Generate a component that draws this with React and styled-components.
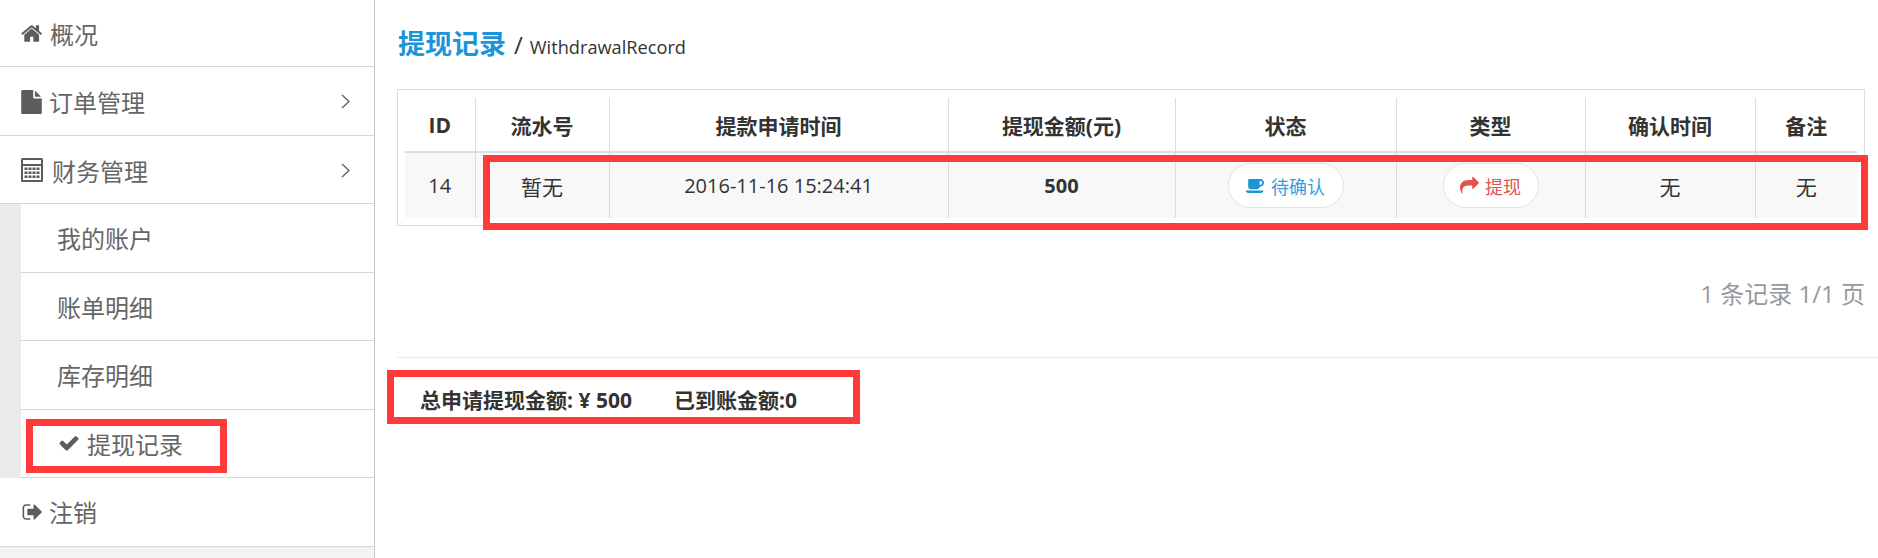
import React from "react";
import styled, { createGlobalStyle } from "styled-components";

const GlobalStyle = createGlobalStyle`
  html, body {
    margin: 0;
    padding: 0;
    background: #fff;
    font-family: "Open Sans", "Noto Sans CJK SC", sans-serif;
    color: #333;
    overflow: hidden;
  }
`;

const Page = styled.div`
  position: relative;
  display: flex;
  width: 1878px;
  height: 558px;
  overflow: hidden;
`;

const Sidebar = styled.aside`
  width: 374px;
  flex: none;
  display: flex;
  flex-direction: column;
  border-right: 1px solid #c8c8c8;
  background: #f3f3f3;
`;

const MenuRow = styled.div`
  display: flex;
  align-items: center;
  gap: ${(p) => p.$gap || 6}px;
  height: ${(p) => p.$height || 68.5}px;
  box-sizing: border-box;
  flex: none;
  padding: ${(p) => p.$shift || 0}px 25px 0 21px;
  background: #fff;
  border-bottom: 1px solid #d6d6d6;
  color: #666;
  font-size: 24px;
`;

const MenuLabel = styled.span`
  flex: 1;
`;

const SubMenu = styled.div`
  display: flex;
  flex-direction: column;
  flex: none;
  padding-left: 21px;
  background: #ebebeb;
`;

const SubRow = styled(MenuRow)`
  padding-left: ${(p) => (p.$active ? 37 : 36)}px;
  gap: 7px;
`;

const Icon = styled.svg`
  flex: none;
  width: ${(p) => p.$w}px;
  height: ${(p) => p.$h}px;
  fill: ${(p) => p.$color || "#5c5c5c"};
`;

const Chevron = styled.svg`
  flex: none;
  width: 9px;
  height: 15px;
  margin-right: -1px;
  fill: none;
  stroke: #666;
  stroke-width: 1.5;
`;

const Main = styled.main`
  flex: 1;
  min-width: 0;
  padding: 0 13px 0 22px;
`;

const TitleRow = styled.div`
  display: flex;
  align-items: baseline;
  height: 89px;
  box-sizing: border-box;
  padding: 26px 0 0 1px;
  color: #333;
`;

const Title = styled.h1`
  margin: 0;
  font-size: 27px;
  line-height: 36px;
  font-weight: 700;
  color: #1b95d8;
`;

const Slash = styled.span`
  margin: 0 7px 0 8px;
  font-size: 24px;
`;

const Subtitle = styled.span`
  font-size: 18.2px;
`;

const TableBox = styled.div`
  width: 1468px;
  height: 137px;
  box-sizing: border-box;
  padding: 8px 7px 7px;
  border: 1px solid #dcdcdc;
`;

const Table = styled.table`
  width: 1452px;
  table-layout: fixed;
  border-collapse: collapse;
`;

const Th = styled.th`
  height: 53px;
  padding: 0;
  font-size: 21px;
  font-weight: 700;
  color: #333;
  text-align: center;
  border-bottom: 2px solid #dcdcdc;
  border-left: 1px solid #dcdcdc;
  &:first-child {
    border-left: 0;
  }
`;

const Td = styled.td`
  height: 65px;
  padding: 0;
  font-size: ${(p) => (p.$cjk ? 21 : 20)}px;
  font-weight: ${(p) => (p.$bold ? 700 : 400)};
  color: #333;
  text-align: center;
  background: #f8f8f8;
  border-left: 1px solid #dcdcdc;
  &:first-child {
    border-left: 0;
  }
`;

const Pill = styled.span`
  display: inline-flex;
  align-items: center;
  justify-content: center;
  gap: 6px;
  width: ${(p) => p.$width}px;
  height: 45px;
  box-sizing: border-box;
  vertical-align: middle;
  background: #fff;
  border: 1px solid #e3e3e3;
  border-radius: 23px;
  font-size: 18px;
  color: ${(p) => p.$color};
`;

const Pager = styled.div`
  height: 131px;
  box-sizing: border-box;
  padding-top: 50px;
  text-align: right;
  width: 1468px;
  font-size: 24px;
  line-height: 36px;
  color: #999;
`;

const Rule = styled.hr`
  margin: 0 -13px 0 0;
  border: 0;
  border-top: 1px solid #eaeaea;
`;

const Totals = styled.div`
  display: flex;
  gap: 42px;
  padding: 27px 0 0 23px;
  font-size: 21px;
  line-height: 30px;
  font-weight: 700;
  color: #333;
`;

const Annotation = styled.div`
  position: absolute;
  left: ${(p) => p.$left}px;
  top: ${(p) => p.$top}px;
  width: ${(p) => p.$width}px;
  height: ${(p) => p.$height}px;
  box-sizing: border-box;
  border: 7px solid #ff3a3a;
  pointer-events: none;
`;

const HomeIcon = () => (
  <Icon $w={23} $h={23} viewBox="0 0 1792 1792">
    <path d="M1408 992v480q0 26-19 45t-45 19h-384v-384h-256v384h-384q-26 0-45-19t-19-45v-480q0-1 .5-3t.5-3l575-474 575 474q1 2 1 6zm223-69l-62 74q-8 9-21 11h-3q-13 0-21-7l-692-577-692 577q-12 8-24 7-13-2-21-11l-62-74q-8-10-7-23.500t11-21.500l719-599q32-26 76-26t76 26l244 204v-195q0-14 9-23t23-9h192q14 0 23 9t9 23v408l219 182q10 8 11 21.500t-7 23.500z" />
  </Icon>
);

const FileIcon = () => (
  <Icon $w={21} $h={24} viewBox="0 0 1536 1792">
    <path d="M1024 512v-472q22 14 36 28l408 408q14 14 28 36h-472zm-128 32q0 40 28 68t68 28h544v1056q0 40-28 68t-68 28h-1344q-40 0-68-28t-28-68v-1600q0-40 28-68t68-28h800v544z" />
  </Icon>
);

const CalculatorIcon = () => (
  <Icon $w={22} $h={24} viewBox="0 0 22 24">
    <path
      fillRule="evenodd"
      d="M1.500 0h19A1.500 1.500 0 0 1 22 1.500v21a1.500 1.500 0 0 1-1.500 1.500h-19A1.500 1.500 0 0 1 0 22.500v-21A1.500 1.500 0 0 1 1.500 0zM2 2v4h18V2zm0 6v14h18V8z"
    />
    <path d="M3.500 9.500h3v2.500h-3zm4 0h3v2.500h-3zm4 0h3v2.500h-3zm4 0h3v2.500h-3zM3.500 13.500h3V16h-3zm4 0h3V16h-3zm4 0h3V16h-3zm4 0h3V16h-3zM3.500 17.500h3V20h-3zm4 0h3V20h-3zm4 0h3V20h-3zm4 0h3V20h-3z" />
  </Icon>
);

const CheckIcon = () => (
  <Icon $w={22} $h={22} viewBox="0 0 1792 1792">
    <path d="M1671 566q0 40-28 68l-724 724-136 136q-28 28-68 28t-68-28l-136-136-362-362q-28-28-28-68t28-68l136-136q28-28 68-28t68 28l294 295 656-657q28-28 68-28t68 28l136 136q28 28 28 68z" />
  </Icon>
);

const SignOutIcon = () => (
  <Icon $w={22} $h={22} viewBox="0 0 1664 1792">
    <path d="M704 1440q0 4 1 20t.5 26.500t-3 23.500t-10 19.500t-20.500 6.500h-320q-119 0-203.500-84.500t-84.500-203.500v-704q0-119 84.500-203.500t203.500-84.500h320q13 0 22.500 9.500t9.500 22.500q0 4 1 20t.5 26.500t-3 23.500t-10 19.500t-20.500 6.500h-320q-66 0-113 47t-47 113v704q0 66 47 113t113 47h312l11.500 1t11.500 3t8 5.500t7 9t2 13.500zm928-544q0 26-19 45l-544 544q-19 19-45 19t-45-19t-19-45v-288h-448q-26 0-45-19t-19-45v-384q0-26 19-45t45-19h448v-288q0-26 19-45t45-19t45 19l544 544q19 19 19 45z" />
  </Icon>
);

const CoffeeIcon = () => (
  <Icon $w={19} $h={18} $color="#1b95d8" viewBox="0 0 1920 1792">
    <path d="M1632 576q0-80-56-136t-136-56h-64v384h64q80 0 136-56t56-136zm-1664 768h1792q0 106-75 181t-181 75h-1280q-106 0-181-75t-75-181zm1856-768q0 159-112.500 271.500t-271.500 112.500h-64v32q0 92-66 158t-158 66h-704q-92 0-158-66t-66-158v-736q0-26 19-45t45-19h1152q159 0 271.500 112.500t112.500 271.500z" />
  </Icon>
);

const ShareIcon = () => (
  <Icon $w={19} $h={19} $color="#e0534f" viewBox="0 0 1792 1792">
    <path d="M1792 640q0 26-19 45l-512 512q-19 19-45 19t-45-19-19-45v-256h-224q-98 0-175.500 6t-154 21.500-133 42.500-105.500 69.500-80 101-48.500 138.500-17.500 181q0 55 5 123 0 6 2.500 23.500t2.500 26.500q0 15-8.500 25t-23.500 10q-16 0-28-17-7-9-13-22t-13.500-30-10.500-24q-127-285-127-451 0-199 53-333 162-403 875-403h224v-256q0-26 19-45t45-19 45 19l512 512q19 19 19 45z" />
  </Icon>
);

const MenuChevron = () => (
  <Chevron viewBox="0 0 9 15">
    <path d="M1 1l7 6.500-7 6.500" />
  </Chevron>
);

const columns = [
  ["ID", 70],
  ["流水号", 134],
  ["提款申请时间", 339],
  ["提现金额(元)", 227],
  ["状态", 221],
  ["类型", 189],
  ["确认时间", 170],
  ["备注", 102],
];

const subItems = ["我的账户", "账单明细", "库存明细"];

export default function App() {
  return (
    <Page>
      <GlobalStyle />
      <Sidebar>
        <MenuRow $height={67}>
          <HomeIcon />
          <MenuLabel>概况</MenuLabel>
        </MenuRow>
        <MenuRow $shift={2} $gap={7}>
          <FileIcon />
          <MenuLabel>订单管理</MenuLabel>
          <MenuChevron />
        </MenuRow>
        <MenuRow $shift={2} $gap={9}>
          <CalculatorIcon />
          <MenuLabel>财务管理</MenuLabel>
          <MenuChevron />
        </MenuRow>
        <SubMenu>
          {subItems.map((item) => (
            <SubRow key={item}>
              <MenuLabel>{item}</MenuLabel>
            </SubRow>
          ))}
          <SubRow $active>
            <CheckIcon />
            <MenuLabel>提现记录</MenuLabel>
          </SubRow>
        </SubMenu>
        <MenuRow>
          <SignOutIcon />
          <MenuLabel>注销</MenuLabel>
        </MenuRow>
      </Sidebar>

      <Main>
        <TitleRow>
          <Title>提现记录</Title>
          <Slash>/</Slash>
          <Subtitle>WithdrawalRecord</Subtitle>
        </TitleRow>

        <TableBox>
          <Table>
            <colgroup>
              {columns.map(([name, width]) => (
                <col key={name} width={width} />
              ))}
            </colgroup>
            <thead>
              <tr>
                {columns.map(([name]) => (
                  <Th key={name}>{name}</Th>
                ))}
              </tr>
            </thead>
            <tbody>
              <tr>
                <Td>14</Td>
                <Td $cjk>暂无</Td>
                <Td>2016-11-16 15:24:41</Td>
                <Td $bold>500</Td>
                <Td>
                  <Pill $width={116} $color="#3a9bd9">
                    <CoffeeIcon />
                    待确认
                  </Pill>
                </Td>
                <Td>
                  <Pill $width={96} $color="#e0534f">
                    <ShareIcon />
                    提现
                  </Pill>
                </Td>
                <Td $cjk>无</Td>
                <Td $cjk>无</Td>
              </tr>
            </tbody>
          </Table>
        </TableBox>

        <Pager>1 条记录 1/1 页</Pager>
        <Rule />
        <Totals>
          <span>总申请提现金额: ¥ 500</span>
          <span>已到账金额:0</span>
        </Totals>
      </Main>

      <Annotation $left={26} $top={419} $width={201} $height={54} />
      <Annotation $left={483} $top={155} $width={1385} $height={75} />
      <Annotation $left={387} $top={370} $width={473} $height={54} />
    </Page>
  );
}
